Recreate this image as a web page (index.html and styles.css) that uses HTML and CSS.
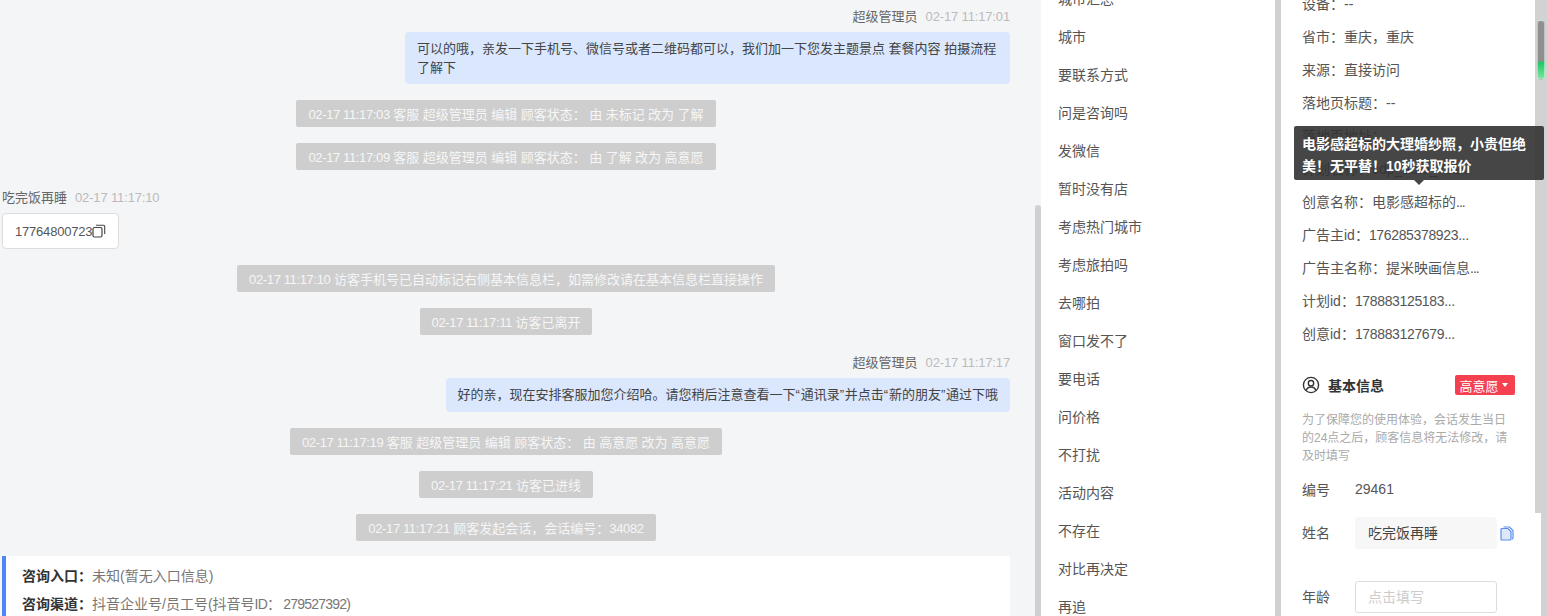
FILE: index.html
```html
<!DOCTYPE html>
<html lang="zh">
<head>
<meta charset="utf-8">
<title>会话详情</title>
<link rel="stylesheet" href="styles.css">
</head>
<body>
<div class="app">
  <main class="chat">
    <div class="chat-flow">
      <div class="meta meta-right"><span class="who">超级管理员</span><span class="when">02-17 11:17:01</span></div>
      <div class="bubble">可以的哦，亲发一下手机号、微信号或者二维码都可以，我们加一下您发主题景点 套餐内容 拍摄流程了解下</div>
      <div class="sys"><span><i class="ts">02-17 11:17:03</i> 客服 超级管理员 编辑 顾客状态： 由 未标记 改为 了解</span></div>
      <div class="sys"><span><i class="ts">02-17 11:17:09</i> 客服 超级管理员 编辑 顾客状态： 由 了解 改为 高意愿</span></div>
      <div class="meta"><span class="who">吃完饭再睡</span><span class="when">02-17 11:17:10</span></div>
      <div class="phone"><span class="num">17764800723</span><svg class="copy" viewBox="0 0 14 14" width="14" height="14"><rect x="1" y="3.5" width="9" height="9.5" rx="1.5" fill="none" stroke="#444" stroke-width="1.2"/><path d="M4 1.2h7.5a1.2 1.2 0 0 1 1.2 1.2V10" fill="none" stroke="#444" stroke-width="1.1"/></svg></div>
      <div class="sys"><span><i class="ts">02-17 11:17:10</i> 访客手机号已自动标记右侧基本信息栏，如需修改请在基本信息栏直接操作</span></div>
      <div class="sys"><span><i class="ts">02-17 11:17:11</i> 访客已离开</span></div>
      <div class="meta meta-right"><span class="who">超级管理员</span><span class="when">02-17 11:17:17</span></div>
      <div class="bubble bubble-single">好的亲，现在安排客服加您介绍哈。请您稍后注意查看一下<i class="q">“</i>通讯录<i class="q">”</i>并点击<i class="q">“</i>新的朋友<i class="q">”</i>通过下哦</div>
      <div class="sys"><span><i class="ts">02-17 11:17:19</i> 客服 超级管理员 编辑 顾客状态： 由 高意愿 改为 高意愿</span></div>
      <div class="sys"><span><i class="ts">02-17 11:17:21</i> 访客已进线</span></div>
      <div class="sys sys-last"><span><i class="ts">02-17 11:17:21</i> 顾客发起会话，会话编号：<i class="ts">34082</i></span></div>
      <div class="entry">
        <p><b>咨询入口：</b>未知(暂无入口信息)</p>
        <p><b>咨询渠道：</b>抖音企业号/员工号(抖音号<i class="id">ID： 279527392)</i></p>
      </div>
    </div>
    <div class="chat-thumb"></div>
  </main>

  <nav class="tags">
    <ul class="tag-list">
      <li>城市汇总</li><li>城市</li><li>要联系方式</li><li>问是咨询吗</li><li>发微信</li><li>暂时没有店</li><li>考虑热门城市</li><li>考虑旅拍吗</li><li>去哪拍</li><li>窗口发不了</li><li>要电话</li><li>问价格</li><li>不打扰</li><li>活动内容</li><li>不存在</li><li>对比再决定</li><li>再追</li>
    </ul>
  </nav>

  <aside class="side">
    <div class="side-inner">
      <ul class="facts">
        <li>设备：--</li>
        <li>省市：重庆，重庆</li>
        <li>来源：直接访问</li>
        <li>落地页标题：--</li>
        <li>落地页地址：</li>
        <li>计划名称：cdp_auto_782<i class="dots">...</i></li>
        <li>创意名称：电影感超标的<i class="dots">...</i></li>
        <li>广告主id：<i class="tight">176285378923...</i></li>
        <li>广告主名称：提米映画信息<i class="dots">...</i></li>
        <li>计划id：<i class="tight">178883125183...</i></li>
        <li>创意id：<i class="tight">178883127679...</i></li>
      </ul>
      <div class="basic-head">
        <svg class="user-icon" viewBox="0 0 18 18" width="18" height="18"><circle cx="9" cy="9" r="7.6" fill="none" stroke="#333" stroke-width="1.4"/><circle cx="9" cy="7.2" r="2.7" fill="none" stroke="#333" stroke-width="1.4"/><path d="M4.2 14.6c.7-2.4 2.6-3.6 4.8-3.6s4.1 1.2 4.8 3.6" fill="none" stroke="#333" stroke-width="1.4"/></svg>
        <strong>基本信息</strong>
        <span class="level">高意愿<i class="caret"></i></span>
      </div>
      <p class="notice">为了保障您的使用体验，会话发生当日的24点之后，顾客信息将无法修改，请及时填写</p>
      <div class="field field-id"><label>编号</label><span>29461</span></div>
      <div class="field field-name"><label>姓名</label><div class="val">吃完饭再睡</div>
        <svg class="doc" viewBox="0 0 14 15" width="14" height="15"><path d="M3.5 1h6l3.5 3.5V12a1 1 0 0 1-1 1" fill="none" stroke="#5b8def" stroke-width="1.2"/><path d="M1 3.5a1 1 0 0 1 1-1h6l3 3V13a1 1 0 0 1-1 1H2a1 1 0 0 1-1-1z" fill="#dfe8fb" stroke="#5b8def" stroke-width="1.2"/></svg>
      </div>
      <div class="field field-age"><label>年龄</label><div class="val val-empty">点击填写</div></div>
    </div>
    <div class="side-track">
      <div class="side-thumb"></div>
      <div class="side-patch"></div>
    </div>
  </aside>
</div>
<div class="tip">电影感超标的大理婚纱照，小贵但绝美！无平替！10秒获取报价</div>
</body>
</html>
```
FILE: styles.css
```css
* { box-sizing: border-box; }
html, body { margin: 0; height: 616px; overflow: hidden; }
body {
  font-family: "Liberation Sans", "Noto Sans CJK SC", sans-serif;
  font-size: 13px;
  color: #555;
  background: #fff;
  position: relative;
}
ul { list-style: none; margin: 0; padding: 0; }
p { margin: 0; }
i { font-style: normal; }
.ts { letter-spacing: -0.35px; }
.num { letter-spacing: -0.2px; }
.tight { letter-spacing: -0.35px; }
.id { letter-spacing: -0.8px; }
.dots { letter-spacing: -1px; }
.q { letter-spacing: 0.75px; }

.app { display: flex; height: 616px; overflow: hidden; }

/* chat column */
.chat { width: 1041px; flex: none; background: #f4f5f7; position: relative; overflow: hidden; }
.chat-flow { display: flex; flex-direction: column; padding: 5px 31px 0 2px; }
.meta { height: 21px; line-height: 23px; margin-bottom: 6px; white-space: nowrap; }
.meta-right { text-align: right; }
.who { color: #666; margin-right: 8px; }
.when { color: #bbb; letter-spacing: -0.15px; }
.bubble {
  align-self: flex-end;
  max-width: 605px;
  padding: 7px 12px;
  line-height: 19px;
  background: #dae7fd;
  border-radius: 4px;
  color: #444;
  margin-bottom: 16px;
}
.bubble-single { padding-bottom: 8px; }
.sys { text-align: center; height: 27px; margin-bottom: 16px; }
.sys-last { margin-bottom: 15px; }
.sys span {
  display: inline-block;
  height: 27px;
  line-height: 29px;
  padding: 0 12px;
  background: #cecece;
  color: #f6f6f6;
  border-radius: 2px;
  white-space: nowrap;
  word-spacing: -0.15px;
}
.phone {
  align-self: flex-start;
  display: flex;
  align-items: center;
  height: 36px;
  padding: 0 12px;
  background: #fff;
  border: 1px solid #ddd;
  border-radius: 4px;
  margin-bottom: 16px;
}
.entry { background: #fff; border-left: 4px solid #4f86f7; padding: 6px 16px; font-size: 14px; }
.entry p { line-height: 28px; color: #777; }
.entry b { color: #333; font-weight: 700; }
.chat-thumb { position: absolute; top: 205px; right: 0; bottom: 0; width: 6px; background: #d0d0d0; border-radius: 3px 3px 0 0; }

/* middle list */
.tags { width: 234px; flex: none; background: #fff; overflow: hidden; font-size: 14px; }
.tag-list { margin-top: -20px; padding-left: 17px; }
.tag-list li { height: 38px; line-height: 38px; color: #555; white-space: nowrap; }

/* right panel */
.side { flex: 1; display: flex; min-width: 0; border-left: 6px solid #d0d0d0; position: relative; overflow: hidden; font-size: 14px; }
.side-inner { width: 254px; flex: none; padding-left: 21px; background: #fff; }
.facts { margin-top: -12px; }
.facts li { height: 33px; line-height: 33px; white-space: nowrap; color: #555; }
.basic-head { display: flex; align-items: center; margin-top: 21px; height: 26px; padding-right: 20px; }
.user-icon { margin-right: 8px; }
.basic-head strong { font-size: 14px; font-weight: 700; color: #333; }
.level {
  margin-left: auto;
  width: 60px;
  height: 20px;
  padding-right: 3px;
  font-size: 13px;
  background: #f5414f;
  color: #fff;
  border-radius: 2px;
  display: flex;
  align-items: center;
  justify-content: center;
}
.caret { width: 0; height: 0; border: 3.5px solid transparent; border-top: 4px solid #fff; border-bottom: 0; margin-left: 3px; }
.notice { font-size: 12px; line-height: 18px; color: #aaa; margin-top: 13px; width: 214px; }
.field { display: flex; align-items: center; }
.field label { width: 53px; flex: none; color: #555; }
.field-id { height: 20px; margin-top: 14px; }
.field-name { margin-top: 18px; height: 32px; }
.field-name label, .field-age label { margin-top: -2px; }
.field-age { margin-top: 32px; height: 32px; }
.val { width: 142px; height: 32px; line-height: 32px; padding-left: 13px; background: #f7f7f7; border-radius: 3px; color: #444; }
.val-empty { background: #fff; border: 1px solid #ddd; line-height: 30px; padding-left: 12px; color: #ccc; }
.doc { margin-left: 3px; }

.side-track { flex: 1; background: #d2d2d2; position: relative; }
.side-thumb {
  position: absolute; top: 20px; left: 2px; width: 8px; height: 60px;
  border: 1px solid rgba(255, 255, 255, .45);
  border-radius: 4px;
  background: linear-gradient(#8f8f8f 0 68%, #22c766 72%, #7fe5a4 100%);
}
.side-patch { position: absolute; top: 513px; left: 0; bottom: 0; width: 6px; background: #fff; }

/* tooltip */
.tip {
  position: absolute;
  left: 1294px;
  top: 126px;
  width: 250px;
  height: 54px;
  padding: 7px 8px 0;
  font-size: 14px;
  font-weight: 700;
  line-height: 22px;
  color: #fff;
  background: rgba(50, 50, 50, .9);
  border-radius: 2px;
}
.tip::after {
  content: "";
  position: absolute;
  left: 120px;
  bottom: -5px;
  border: 5px solid transparent;
  border-top-color: rgba(50, 50, 50, .9);
  border-bottom: 0;
}
```
